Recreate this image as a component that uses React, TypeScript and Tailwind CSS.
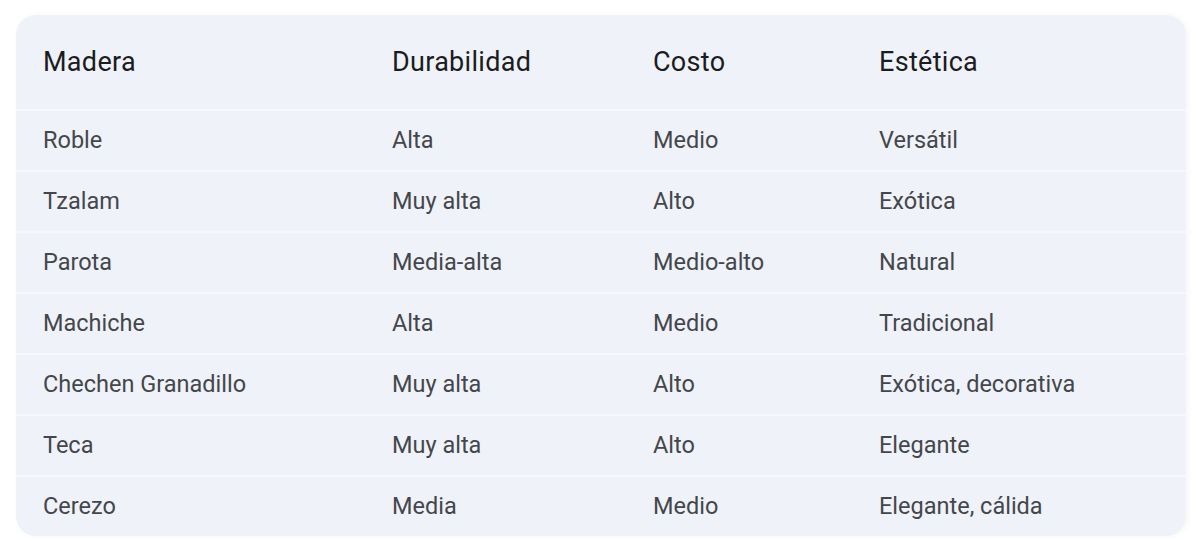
const rows = [
    ['Roble', 'Alta', 'Medio', 'Versátil'],
    ['Tzalam', 'Muy alta', 'Alto', 'Exótica'],
    ['Parota', 'Media-alta', 'Medio-alto', 'Natural'],
    ['Machiche', 'Alta', 'Medio', 'Tradicional'],
    ['Chechen Granadillo', 'Muy alta', 'Alto', 'Exótica, decorativa'],
    ['Teca', 'Muy alta', 'Alto', 'Elegante'],
    ['Cerezo', 'Media', 'Medio', 'Elegante, cálida'],
];

const headers = ['Madera', 'Durabilidad', 'Costo', 'Estética'];

export default function App() {
    return (
        <div className="min-h-screen bg-white px-4 pt-[15px]" style={{ fontFamily: 'Roboto, "Noto Sans", sans-serif' }}>
            <div className="mr-[-3px] overflow-hidden rounded-[20px] bg-[#eff2f9] shadow-[2px_0_6px_rgba(0,0,0,0.04)]">
                <div className="grid h-[94px] grid-cols-[349px_261px_226px_1fr] items-center px-[27px] text-[27px] font-normal tracking-[0.3px] text-[#1b1c1e]">
                    {headers.map((h) => (
                        <div key={h}>{h}</div>
                    ))}
                </div>
                {rows.map((row) => (
                    <div
                        key={row[0]}
                        className="grid h-[61px] grid-cols-[349px_261px_226px_1fr] items-center border-t-2 border-[#f6f8fc] px-[27px] text-[23.5px] text-[#44474a]"
                    >
                        {row.map((cell, i) => (
                            <div key={i}>{cell}</div>
                        ))}
                    </div>
                ))}
            </div>
        </div>
    );
}
